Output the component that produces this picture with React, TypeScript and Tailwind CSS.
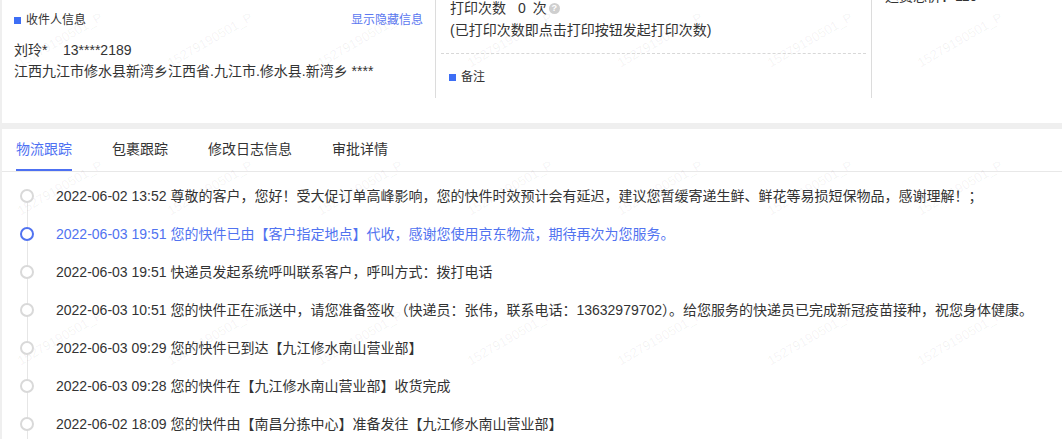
import React from "react"

const tabs = ["物流跟踪", "包裹跟踪", "修改日志信息", "审批详情"]

const traces = [
  { text: "2022-06-02 13:52 尊敬的客户，您好！受大促订单高峰影响，您的快件时效预计会有延迟，建议您暂缓寄递生鲜、鲜花等易损短保物品，感谢理解！；" },
  { text: "2022-06-03 19:51 您的快件已由【客户指定地点】代收，感谢您使用京东物流，期待再次为您服务。", active: true },
  { text: "2022-06-03 19:51 快递员发起系统呼叫联系客户，呼叫方式：拨打电话" },
  { text: "2022-06-03 10:51 您的快件正在派送中，请您准备签收（快递员：张伟，联系电话：13632979702）。给您服务的快递员已完成新冠疫苗接种，祝您身体健康。" },
  { text: "2022-06-03 09:29 您的快件已到达【九江修水南山营业部】" },
  { text: "2022-06-03 09:28 您的快件在【九江修水南山营业部】收货完成" },
  { text: "2022-06-02 18:09 您的快件由【南昌分拣中心】准备发往【九江修水南山营业部】" },
]

const wmX = [60, 210, 360, 510, 660, 810, 960]
const wmY = [40, 188, 338]

function Watermarks() {
  return (
    <div className="pointer-events-none absolute inset-0 overflow-hidden">
      {wmY.map((y) =>
        wmX.map((x) => (
          <span
            key={`${x}-${y}`}
            className="absolute -translate-x-1/2 -translate-y-1/2 -rotate-[30deg] whitespace-nowrap text-[13px] text-black/[0.06]"
            style={{ left: x, top: y }}
          >
            15279190501_P
          </span>
        ))
      )}
    </div>
  )
}

function BlueTitle(props: { label: string }) {
  return (
    <div className="flex items-center gap-[5px] text-[12px] leading-[16px] text-[#333]">
      <span className="block h-[7px] w-[7px] bg-[#3d6ef5]" />
      {props.label}
    </div>
  )
}

export default function App() {
  return (
    <div
      className="relative h-[439px] overflow-hidden bg-[#efefef] pl-[2px]"
      style={{ fontFamily: '"Liberation Sans", Arial, "Noto Sans CJK SC", sans-serif' }}
    >
      {/* top info card */}
      <div className="flex h-[123px] bg-white">
        <div className="h-[98px] w-[434px] border-r border-[#dcdcdc] pl-[12px] pr-[12px] pt-[12px]">
          <div className="flex items-center justify-between">
            <BlueTitle label="收件人信息" />
            <span className="text-[12px] leading-[16px] text-[#5b78f0]">显示隐藏信息</span>
          </div>
          <div className="mt-[12px] text-[14px] leading-[21px] text-[#333]">
            <div className="whitespace-pre">刘玲*    13****2189</div>
            <div>江西九江市修水县新湾乡江西省.九江市.修水县.新湾乡 ****</div>
          </div>
        </div>

        <div className="h-[98px] w-[436px] border-r border-[#dcdcdc] px-[5px]">
          <div className="pl-[9px] text-[14px] leading-[22px] text-[#333]">
            <div className="-mt-[3px] flex items-center">
              <span>打印次数</span>
              <span className="ml-[12px]">0</span>
              <span className="ml-[7px]">次</span>
              <span className="ml-[2px] flex h-[11px] w-[11px] items-center justify-center rounded-full bg-[#cfcfcf] text-[9px] font-bold leading-none text-white">
                ?
              </span>
            </div>
            <div>(已打印次数即点击打印按钮发起打印次数)</div>
          </div>
          <div className="mt-[12px] border-t border-dashed border-[#d8d8d8]" />
          <div className="mt-[15px] pl-[8px]">
            <BlueTitle label="备注" />
          </div>
        </div>

        <div className="h-[98px] flex-1 pl-[13px]">
          <div className="-mt-[15px] text-[14px] leading-[22px] text-[#333]">运费总价：110</div>
        </div>
      </div>

      {/* tracking card */}
      <div className="mt-[6px] h-[310px] bg-white">
        <div className="flex gap-[40px] border-b border-[#e8e8e8] pl-[14px]">
          {tabs.map((t, i) => (
            <div
              key={t}
              className={
                i === 0
                  ? "border-b-2 border-[#4d70f2] pb-[10px] pt-[10px] text-[14px] leading-[20px] text-[#4d70f2]"
                  : "border-b-2 border-transparent pb-[10px] pt-[10px] text-[14px] leading-[20px] text-[#333]"
              }
            >
              {t}
            </div>
          ))}
        </div>

        <ul className="pt-[5px]">
          {traces.map((tr, i) => (
            <li key={i} className="relative flex h-[38px] items-center pl-[18px]">
              <span
                className={
                  i === 0
                    ? "absolute left-[25px] top-1/2 bottom-0 w-px bg-[#e6e6e6]"
                    : "absolute left-[25px] top-0 bottom-0 w-px bg-[#e6e6e6]"
                }
              />
              <span
                className={
                  tr.active
                    ? "relative z-10 h-[14px] w-[14px] shrink-0 rounded-full border-2 border-[#5173f0] bg-white"
                    : "relative z-10 h-[14px] w-[14px] shrink-0 rounded-full border-2 border-[#d9d9d9] bg-white"
                }
              />
              <span
                className={
                  tr.active
                    ? "ml-[22px] whitespace-nowrap text-[14px] leading-[20px] text-[#5173f0]"
                    : "ml-[22px] whitespace-nowrap text-[14px] leading-[20px] text-[#333]"
                }
              >
                {tr.text}
              </span>
            </li>
          ))}
        </ul>
      </div>

      <Watermarks />
    </div>
  )
}
